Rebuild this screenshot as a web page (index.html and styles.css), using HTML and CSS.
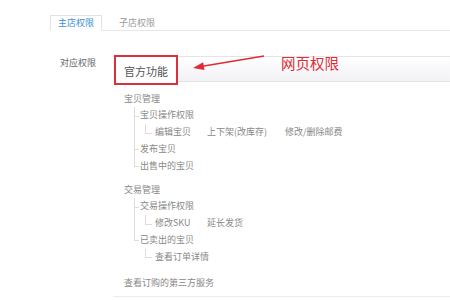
FILE: index.html
```html
<!DOCTYPE html>
<html lang="zh-CN">
<head>
    <meta charset="UTF-8">
    <title>店铺权限</title>
    <link rel="stylesheet" href="styles.css">
</head>
<body>
    <div class="tabs">
        <span class="tab active">主店权限</span>
        <span class="tab">子店权限</span>
    </div>

    <div class="perm">
        <div class="perm-label">对应权限</div>
        <div class="perm-body">
            <div class="func-bar">
                <span class="func-name">官方功能</span>
            </div>

            <div class="tree">
                <div class="group">
                    <div class="node">宝贝管理</div>
                    <ul class="sub">
                        <li>宝贝操作权限
                            <ul class="sub lv2">
                                <li class="ops">
                                    <span>编辑宝贝</span>
                                    <span>上下架(改库存)</span>
                                    <span>修改/删除邮费</span>
                                </li>
                            </ul>
                        </li>
                        <li>发布宝贝</li>
                        <li>出售中的宝贝</li>
                    </ul>
                </div>

                <div class="group">
                    <div class="node">交易管理</div>
                    <ul class="sub">
                        <li>交易操作权限
                            <ul class="sub lv2">
                                <li class="ops">
                                    <span>修改SKU</span>
                                    <span>延长发货</span>
                                </li>
                            </ul>
                        </li>
                        <li>已卖出的宝贝
                            <ul class="sub lv2">
                                <li>查看订单详情</li>
                            </ul>
                        </li>
                    </ul>
                </div>

                <div class="group last">
                    <div class="node">查看订购的第三方服务</div>
                </div>
            </div>
        </div>
    </div>

    <!-- annotation -->
    <svg class="note-arrow" width="450" height="300" viewBox="0 0 450 300">
        <line x1="264" y1="56" x2="201" y2="66.6" stroke="#e02a35" stroke-width="1.5"/>
        <polygon points="193,68 203.1,62.3 204.5,70.1" fill="#e02a35"/>
    </svg>
    <span class="note-text">网页权限</span>
</body>
</html>
```

FILE: styles.css
```css
body {
    margin: 0;
    font-family: "Noto Sans CJK SC", "Noto Sans", sans-serif;
    background: #fff;
    color: #666;
    position: relative;
    width: 450px;
    height: 300px;
    overflow: hidden;
}
.tabs {
    display: flex;
    margin: 15px 0 0 50px;
    border-bottom: 1px solid #e6e6e6;
    height: 15px;
}
.tab {
    font-size: 9px;
    line-height: 14px;
    padding: 0 7px;
    color: #999;
    border: 1px solid transparent;
    margin-left: 9px;
}
.tab.active {
    margin-left: 0;
    color: #3b8ed8;
    background: #fff;
    border-color: #e2e2e2;
    border-bottom-color: #fff;
    height: 14px;
}
.perm {
    display: flex;
    margin-top: 25px;
}
.perm-label {
    margin-left: 60px;
    width: 53px;
    font-size: 9px;
    line-height: 14px;
    color: #666;
}
.perm-body {
    flex: 1;
}
.func-bar {
    height: 24px;
    border-top: 1px solid #e4e4e4;
    border-bottom: 1px solid #e4e4e4;
    background: linear-gradient(#fff, #f2f2f6);
}
.func-name {
    display: inline-block;
    margin: -3px 0 0 1px;
    height: 26px;
    padding: 0 8px;
    border: 2px solid #d8323c;
    font-size: 11px;
    line-height: 28px;
    color: #555;
    background: #fff;
}
.tree {
    margin-top: 8.6px;
    padding: 0 0 4.5px 11px;
    font-size: 9px;
    line-height: 16.8px;
    color: #888;
    border-bottom: 1px solid #ececec;
}
.group {
    margin-bottom: 7px;
}
.group.last {
    margin-top: 9px;
    margin-bottom: 0;
}
.sub {
    list-style: none;
    margin: 0 0 0 10px;
    padding: 0;
}
.sub li {
    position: relative;
    padding-left: 6px;
}
.sub li::before {
    content: '';
    position: absolute;
    left: 0;
    top: 0;
    width: 4px;
    height: 8.4px;
    border-left: 1px solid #dcdcdc;
    border-bottom: 1px solid #dcdcdc;
}
.sub li:not(:last-child)::after {
    content: '';
    position: absolute;
    left: 0;
    top: 0;
    bottom: 0;
    border-left: 1px solid #dcdcdc;
}
.sub.lv2 {
    margin-left: 5px;
}
.sub.lv2 li {
    padding-left: 10px;
}
.sub.lv2 li::before {
    width: 6px;
}
.ops {
    display: grid;
    grid-template-columns: 52px 78px auto;
}
.note-arrow {
    position: absolute;
    left: 0;
    top: 0;
    pointer-events: none;
}
.note-text {
    position: absolute;
    left: 281px;
    top: 55px;
    font-size: 14.5px;
    line-height: 16px;
    color: #e02a35;
}
```
